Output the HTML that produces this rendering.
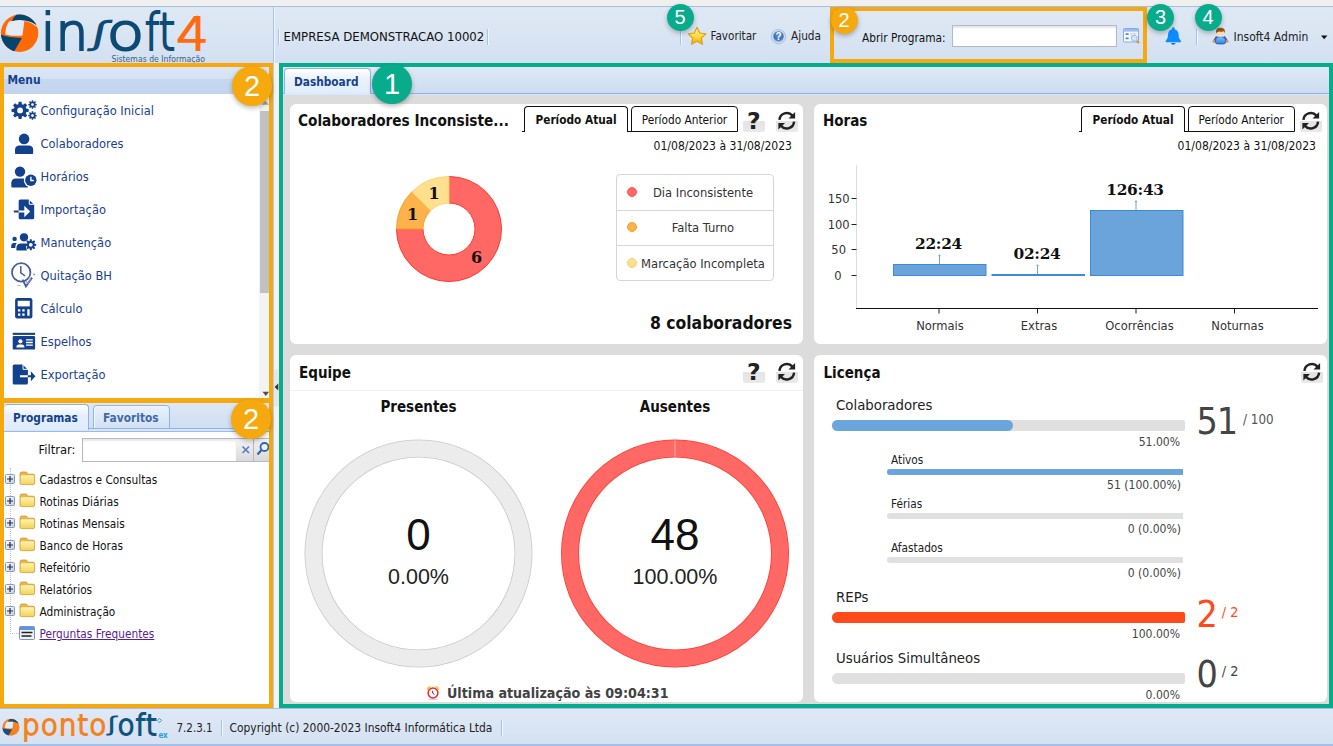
<!DOCTYPE html>
<html lang="pt-BR">
<head>
<meta charset="utf-8">
<title>Pontosoft - Dashboard</title>
<style>
*{box-sizing:border-box;margin:0;padding:0}
html,body{width:1333px;height:746px;overflow:hidden}
body{position:relative;background:#dce6f4;font-family:"DejaVu Sans Condensed","Liberation Sans",sans-serif;font-size:11.75px;color:#111}
.abs,.abs-c>*{position:absolute}
svg{position:absolute;overflow:visible}
.badge{position:absolute;border-radius:50%;color:#fff;text-align:center;font-family:"Liberation Sans",sans-serif;box-shadow:0 2px 5px rgba(0,0,0,.28);z-index:50}
.badge.o{background:#f6a90e}
.badge.tl{background:#08ab8b}
.big{width:40px;height:40px;line-height:41px;font-size:29px}
.sm{width:27px;height:27px;line-height:27px;font-size:20px}
.sep{position:absolute;width:2px;border-left:1px solid #a5c3ec;border-right:1px solid #f2f7fd;top:29px;height:16px}
.t{position:absolute;white-space:nowrap;line-height:1}
/* frames */
.frame{position:absolute;border-style:solid;z-index:40;pointer-events:none}
/* header */
#topstrip{left:0;top:0;width:1333px;height:6px;background:#f0f0f0}
#hdr{left:0;top:6px;width:1333px;height:57px;background:linear-gradient(#dfe9f4,#dae5f3 50%,#d2e0f1);border-top:1px solid #a3bfe8}
/* left */
#menuhd{left:4px;top:67px;width:265px;height:27px;background:linear-gradient(#dbe6f5 0,#d6e3f4 42%,#c6d8f0 46%,#c3d5ee 100%)}
#menu{left:4px;top:94px;width:265px;height:304px;background:#fff}
.mi{position:absolute;left:40.5px;font-size:12.75px;color:#1c3f8c;line-height:16px;white-space:nowrap}
.mic{position:absolute;left:0;top:0;fill:#14418b}
.tr{position:absolute;left:39.5px;font-size:11.75px;color:#111;white-space:nowrap;line-height:14px}

/* dashboard */
.card{position:absolute;background:#fff;border-radius:6px}
.ct{position:absolute;white-space:nowrap;line-height:1;font-family:"DejaVu Sans Condensed","DejaVu Sans","Liberation Sans",sans-serif;font-weight:bold;font-size:15px;color:#111;letter-spacing:0}
.ptab{position:absolute;top:106px;height:26px;border:1px solid #111;border-radius:4px 4px 0 0;background:#fff;font-size:11.75px;text-align:center;line-height:26px;color:#111;white-space:nowrap}
.ptab.on{border-bottom:none;font-weight:bold}
.ibtn{position:absolute;width:22px;height:21px;border-radius:2px;background:linear-gradient(#fff 0,#fff 45%,#e4e4e4 50%,#e9e9e9 100%)}
.q{position:absolute;font-weight:bold;font-size:23.5px;line-height:1;color:#222;font-family:"DejaVu Sans","Liberation Sans",sans-serif}
.dt{position:absolute;white-space:nowrap;line-height:1;font-size:12.05px;color:#111;text-align:right}
.lg{position:absolute;white-space:nowrap;line-height:1;font-size:12.85px;color:#333;text-align:center;left:633px;width:140px}
.sv{font-family:"DejaVu Serif","Liberation Serif",serif;font-weight:bold;font-size:15.4px;fill:#111;letter-spacing:-.3px}
.ax{font-family:"DejaVu Sans Condensed","Liberation Sans",sans-serif;font-size:12.8px;fill:#333}
.pl{position:absolute;white-space:nowrap;line-height:1;color:#222}
.ar{font-family:"Liberation Sans",sans-serif}
.pv{position:absolute;white-space:nowrap;line-height:1;color:#444;font-size:12.05px;text-align:right;width:120px}
.bar{position:absolute;background:#e0e0e0}
.bar i{position:absolute;left:0;top:0;height:100%;display:block}
</style>
</head>
<body>
<svg width="0" height="0"><defs><g id="rfi"><path d="M3.200 9.200A6.900 6.900 0 0 1 15.300 5.200" fill="none" stroke="#222" stroke-width="2.300"/><path d="M17.800 1.800V8h-6.200z" fill="#222"/><path d="M16.800 10.800A6.900 6.900 0 0 1 4.700 14.800" fill="none" stroke="#222" stroke-width="2.300"/><path d="M2.200 18.200V12h6.200z" fill="#222"/></g></defs></svg>
<div id="topstrip" class="abs"></div>
<div id="hdr" class="abs"></div>

<!-- ===== logo ===== -->
<svg style="left:0;top:13px" width="40" height="40" viewBox="0 0 40 40">
 <circle cx="19.6" cy="20.2" r="18.7" fill="#ff6a08"/>
 <path d="M5.3 21.4C5.4 16 6.6 12 9.2 8.3L12.1 7.9C16 6.7 21 6.6 24.4 7.7L22.5 22.4C16 23 10 22.7 5.3 21.4Z" fill="#e3ebf7"/>
 <path d="M24.2 7.3C29 8 33.5 9.8 37 13.2" fill="none" stroke="#e3ebf7" stroke-width="1.3"/>
 <path d="M12 8C13 5.2 14.6 3.2 16.6 1.8A18.7 18.7 0 0 1 36.6 12.4C31.5 8.3 21.5 5.6 12 8Z" fill="#05446e"/>
 <path d="M.95 21.6C6 23.8 13 24.6 21.9 25L14.3 38.2A18.7 18.7 0 0 1 .95 21.6Z" fill="#05446e"/>
</svg>
<div class="t" id="lg" style="left:41px;top:1.500px;font-family:'DejaVu Sans','Liberation Sans',sans-serif;font-weight:200;font-size:51px;line-height:62px;color:#0d4a75;-webkit-text-stroke:2.200px #0d4a75;letter-spacing:.5px">in<span id="esh" style="display:inline-block;transform:translateY(-6.500px) skewX(-12deg) scale(.9,.6);transform-origin:50% 48.600px;margin:0 1.500px 0 .5px;-webkit-text-stroke:3.200px #0d4a75">ʃ</span><span style="display:inline-block;transform:scaleX(1.200);margin:0 2.800px 0 2.200px">o</span><span style="display:inline-block;transform:scaleX(.82);margin:0 -1.800px">f</span><span style="display:inline-block;transform:scaleX(.82);margin:0 -1.600px 0 -2.400px">t</span><span style="display:inline-block;transform:scaleY(.88);transform-origin:50% 48.600px;color:#ff6a13;-webkit-text-stroke:2.200px #ff6a13">4</span></div>
<div class="t" style="left:111.500px;top:54.800px;font-size:8.600px;color:#3a6288">Sistemas de Informação</div>
<div class="abs" style="left:273px;top:7px;width:1px;height:56px;background:#a9c4ea"></div>
<div class="abs" style="left:274px;top:7px;width:1px;height:56px;background:#eef4fc"></div>

<!-- ===== header toolbar ===== -->
<div class="sep" style="left:278px"></div>
<div class="t" style="left:283.5px;top:30px;font-size:13.07px;color:#111">EMPRESA DEMONSTRACAO 10002</div>
<div class="sep" style="left:487px"></div>
<div class="sep" style="left:680px"></div>
<div class="t" style="left:710.5px;top:30.8px;font-size:11.6px;color:#222">Favoritar</div>
<div class="t" style="left:791px;top:30.8px;font-size:11.75px;color:#222">Ajuda</div>
<div class="t" style="left:862px;top:33px;font-size:11.78px;color:#111">Abrir Programa:</div>
<div class="abs" style="left:952px;top:25px;width:165px;height:22px;background:#fff;border:1px solid #b5b8c8;box-shadow:inset 0 2px 2px #e6e6e6"></div>
<div class="sep" style="left:1196px"></div>
<div class="t" style="left:1233.5px;top:30.8px;font-size:12px;color:#222">Insoft4 Admin</div>
<svg style="left:1321px;top:35px" width="7" height="5"><path d="M0 .5h6.4L3.2 4.2z" fill="#111"/></svg>

<!-- header icons -->
<svg width="0" height="0"><defs>
<linearGradient id="sg" x1="0" y1="0" x2="0" y2="1"><stop offset="0" stop-color="#fff3a0"/><stop offset=".55" stop-color="#ffd83a"/><stop offset="1" stop-color="#eda900"/></linearGradient>
<radialGradient id="hg" cx=".5" cy=".4" r=".6"><stop offset="0" stop-color="#5d8fcf"/><stop offset=".7" stop-color="#3f74b8"/><stop offset="1" stop-color="#9fc0e8"/></radialGradient>
<linearGradient id="ug" x1="0" y1="0" x2="0" y2="1"><stop offset="0" stop-color="#7cc4f8"/><stop offset="1" stop-color="#2f86e0"/></linearGradient>
</defs></svg>
<svg style="left:687px;top:26px" width="20" height="20" viewBox="0 0 20 20"><path d="M10 1.300l2.700 5.700 6.200.8-4.600 4.300 1.200 6.200L10 15.300l-5.500 3 1.200-6.200L1.100 7.800l6.200-.8z" fill="url(#sg)" stroke="#d8a31c" stroke-width="1.200" stroke-linejoin="round"/></svg>
<svg style="left:771px;top:28.500px" width="16" height="16" viewBox="0 0 16 16"><circle cx="7.500" cy="7.600" r="7.100" fill="#cfdff4" stroke="#9db9e2" stroke-width=".9"/><circle cx="7.500" cy="7.600" r="5.400" fill="url(#hg)"/><text x="7.500" y="11.300" text-anchor="middle" font-family="Liberation Sans,sans-serif" font-weight="bold" font-size="10" fill="#fff">?</text></svg>
<svg style="left:1123px;top:28px" width="18" height="17" viewBox="0 0 18 17"><rect x=".5" y=".5" width="15" height="13.500" rx=".8" fill="#f6f9fd" stroke="#8aa9dc"/><rect x="1" y="1" width="14" height="2.600" fill="#9dbaeb"/><path d="M2.600 6.200h3M2.600 10.400h3" stroke="#4f86e0" stroke-width="1.700"/><path d="M7 5.400h7M7 7h6" stroke="#ccd6e4" stroke-width="1"/><circle cx="11.300" cy="10.300" r="3" fill="#d4e6fa" stroke="#9ab5dd" stroke-width="1"/><path d="M13.700 12.800l2.300 2.400" stroke="#e08a3c" stroke-width="1.800"/></svg>
<svg style="left:1164px;top:26px" width="19" height="20" viewBox="0 0 19 20"><path d="M9.300 1.200q1.300 0 1.300 1.300v.7q4 1.200 4 5.800 0 3.800 1.800 5.300.6.500.6 1.100 0 .9-1.100.9H2.700q-1.100 0-1.100-.9 0-.6.600-1.100Q4 12.800 4 9q0-4.600 4-5.800v-.7q0-1.300 1.300-1.300z" fill="#0d8cff"/><path d="M7.100 17.100h4.400q0 1.700-2.200 1.700t-2.200-1.700z" fill="#0a6fe8"/></svg>
<svg style="left:1212px;top:27px" width="17" height="18" viewBox="0 0 17 18"><path d="M4.700 9.300L1.900 13.800M12.300 9.300L15.100 13.800" stroke="#2f55c4" stroke-width="1.500" fill="none"/><circle cx="2" cy="14.300" r="1.500" fill="#e8963c"/><circle cx="15" cy="14.300" r="1.500" fill="#e8963c"/><path d="M3.400 14.800Q3.200 9.600 8.500 9.600T13.600 14.800Q13.600 16.900 11.400 16.900H5.600Q3.400 16.900 3.400 14.800z" fill="url(#ug)" stroke="#2a4fc0" stroke-width=".9"/><circle cx="8.500" cy="5.600" r="4.300" fill="#f9dcb8"/><path d="M4 6.200Q3.400 .8 8.500 .8T13 6.200Q12.600 4.400 10.800 4.200 9.500 5.400 8 4.600 5.600 4.400 4 6.200z" fill="#9a5514"/></svg>

<!-- ===== left: menu ===== -->
<div id="menuhd" class="abs"></div>
<div class="t" style="left:7.5px;top:74.7px;font-size:11.84px;font-weight:bold;color:#15428b">Menu</div>
<div id="menu" class="abs"></div>
<div class="abs" style="left:258.500px;top:94px;width:10.500px;height:304px;background:#f3f3f3"></div>
<div class="abs" style="left:260px;top:111px;width:9px;height:182px;background:#c1c1c1"></div>
<svg style="left:261px;top:100px" width="8" height="6"><path d="M.5 4.800L4.300 .8L8 4.800z" fill="#a0a0a0"/></svg>
<svg style="left:262.200px;top:390.500px" width="8" height="6"><path d="M.5 .8h6.6L3.8 5z" fill="#505050"/></svg>
<div class="mi" style="top:103px">Configuração Inicial</div>
<div class="mi" style="top:136px">Colaboradores</div>
<div class="mi" style="top:169px">Horários</div>
<div class="mi" style="top:202px">Importação</div>
<div class="mi" style="top:235px">Manutenção</div>
<div class="mi" style="top:268px">Quitação BH</div>
<div class="mi" style="top:301px">Cálculo</div>
<div class="mi" style="top:334px">Espelhos</div>
<div class="mi" style="top:367px">Exportação</div>
<svg style="left:0;top:94px" width="60" height="304" viewBox="0 94 60 304" fill="#14418b">
<path fill-rule="evenodd" d="M26.23 108.57L28.68 108.97L28.68 111.83L26.23 112.23L25.73 113.44L27.18 115.46L25.16 117.48L23.14 116.03L21.93 116.53L21.53 118.98L18.67 118.98L18.27 116.53L17.06 116.03L15.04 117.48L13.02 115.46L14.47 113.44L13.97 112.23L11.52 111.83L11.52 108.97L13.97 108.57L14.47 107.36L13.02 105.34L15.04 103.32L17.06 104.77L18.27 104.27L18.67 101.82L21.53 101.82L21.93 104.27L23.14 104.77L25.16 103.32L27.18 105.34L25.73 107.36ZM23.00 110.40A2.9 2.9 0 1 0 17.20 110.40A2.9 2.9 0 1 0 23.00 110.40Z"/>
<path fill-rule="evenodd" d="M35.37 103.74L36.74 103.89L36.74 105.31L35.37 105.46L35.14 106.02L36.00 107.10L35.00 108.10L33.92 107.24L33.36 107.47L33.21 108.84L31.79 108.84L31.64 107.47L31.08 107.24L30.00 108.10L29.00 107.10L29.86 106.02L29.63 105.46L28.26 105.31L28.26 103.89L29.63 103.74L29.86 103.18L29.00 102.10L30.00 101.10L31.08 101.96L31.64 101.73L31.79 100.36L33.21 100.36L33.36 101.73L33.92 101.96L35.00 101.10L36.00 102.10L35.14 103.18ZM33.90 104.60A1.4 1.4 0 1 0 31.10 104.60A1.4 1.4 0 1 0 33.90 104.60Z"/>
<path fill-rule="evenodd" d="M35.37 114.74L36.74 114.89L36.74 116.31L35.37 116.46L35.14 117.02L36.00 118.10L35.00 119.10L33.92 118.24L33.36 118.47L33.21 119.84L31.79 119.84L31.64 118.47L31.08 118.24L30.00 119.10L29.00 118.10L29.86 117.02L29.63 116.46L28.26 116.31L28.26 114.89L29.63 114.74L29.86 114.18L29.00 113.10L30.00 112.10L31.08 112.96L31.64 112.73L31.79 111.36L33.21 111.36L33.36 112.73L33.92 112.96L35.00 112.10L36.00 113.10L35.14 114.18ZM33.90 115.60A1.4 1.4 0 1 0 31.10 115.60A1.4 1.4 0 1 0 33.90 115.60Z"/>
<circle cx="24.1" cy="138.9" r="5.3"/><path d="M15 153.200v-3.200q0-4.600 4.600-4.600h9q4.600 0 4.600 4.600v3.200q0 .8-.8.800H15.800q-.8 0-.8-.8z"/>
<circle cx="20" cy="171.600" r="5.200"/><path d="M11.300 186.600v-3.300q0-4.700 4.600-4.700h8.200q2 0 3 1.300l1 7.500H12.100q-.8 0-.8-.8z"/><circle cx="30.800" cy="180.300" r="6.900" fill="#fff"/><circle cx="30.800" cy="180.300" r="5.700"/><path d="M30.900 176.800v3.700h2.900" stroke="#fff" stroke-width="1.400" fill="none"/>
<path d="M18.700 200.900q0-1.500 1.500-1.500h8.600l5.400 5.400v13q0 1.500-1.500 1.500H20.200q-1.500 0-1.500-1.500z"/><path d="M29.300 199.400v4.900h4.900" fill="none" stroke="#fff" stroke-width="1"/><path d="M13.800 210.500h5v2h-5z"/><path d="M18.700 210.400h5.600v-4.600l5.900 5.700-5.900 5.700v-4.600h-5.600z" fill="#fff"/>
<circle cx="24" cy="237.300" r="4.100"/><path d="M16.400 250.600v-2.300q0-4.700 4.600-4.700h4.400q1.600 0 2.400.6l-2 2.800 1.200 3.600z"/><circle cx="14.600" cy="238.900" r="2.200"/><path d="M11.200 248v-1.800q0-3.200 3-3.200h2.600q-1.500 1.600-1.500 4.300v.7z"/><path fill-rule="evenodd" d="M34.54 243.68L36.23 243.90L36.23 245.70L34.54 245.92L34.23 246.65L35.27 248.00L34.00 249.27L32.65 248.23L31.92 248.54L31.70 250.23L29.90 250.23L29.68 248.54L28.95 248.23L27.60 249.27L26.33 248.00L27.37 246.65L27.06 245.92L25.37 245.70L25.37 243.90L27.06 243.68L27.37 242.95L26.33 241.60L27.60 240.33L28.95 241.37L29.68 241.06L29.90 239.37L31.70 239.37L31.92 241.06L32.65 241.37L34.00 240.33L35.27 241.60L34.23 242.95ZM32.70 244.80A1.9 1.9 0 1 0 28.90 244.80A1.9 1.9 0 1 0 32.70 244.80Z"/>
<g fill="none" stroke="#4a6098"><circle cx="21.200" cy="272.400" r="9.200" stroke-width="1.800"/><path d="M20.800 266v6.800l4.200 3" stroke-width="1.500"/><path d="M22.600 279.600l3.300 6.800 6.200-8.800" stroke-width="1.900"/><path d="M26 281l1.600 3 3.400-5" stroke-width="1" stroke="#8b9bc0"/><path d="M33 274.400h2.400M34.200 273.200v2.400" stroke-width=".8" stroke="#8b9bc0"/><path d="M17.500 285.500h3" stroke-width=".8" stroke="#8b9bc0"/></g>
<rect x="15.100" y="298" width="17.300" height="20.400" rx="2.200"/><rect x="17.700" y="300.800" width="12.100" height="5.600" fill="#fff"/><path d="M18 309.300h2.300v2.300H18zM22.300 309.300h2.300v2.300h-2.300zM18 313.400h2.300v2.300H18zM22.300 313.400h2.300v2.300h-2.300zM27.300 309.300h2.300v6.400h-2.300z" fill="#fff"/>
<rect x="12.700" y="332.800" width="22.400" height="2.100"/><rect x="12.700" y="336.100" width="22.400" height="13.500" rx="1.200"/><circle cx="20.400" cy="341.300" r="2.100" fill="#fff"/><path d="M16.400 347.500v-.6q0-2.500 2.500-2.500h3q2.500 0 2.500 2.500v.6z" fill="#fff"/><path d="M26 339.900h6.800M26 342.500h6.800M26 345.100h6.800" stroke="#fff" stroke-width="1.300"/>
<path d="M12.700 365.900q0-1.500 1.500-1.500h8.300l5.400 5.400v13.200q0 1.500-1.500 1.500H14.200q-1.500 0-1.500-1.500z"/><path d="M23 364.400v4.900h4.900" fill="none" stroke="#fff" stroke-width="1"/><path d="M20 375.200h7.900v2.100H20z" fill="#fff"/><path d="M27.900 375.200h3v-4l4.500 5-4.500 5v-3.900h-3z"/>
</svg>


<!-- ===== left: programas ===== -->
<div class="abs" style="left:4px;top:403px;width:265px;height:26px;background:linear-gradient(#dde8f6,#cfdef2)"></div>
<div class="abs" style="left:4px;top:428.300px;width:265px;height:4px;background:#d9e6f7;border-top:1px solid #8db2e3;border-bottom:1px solid #99bbe8"></div>
<div class="abs" style="left:4px;top:432px;width:265px;height:272px;background:#fff"></div>
<div class="abs" style="left:4px;top:404px;width:85px;height:25.500px;background:linear-gradient(#fff,#e6f0fc 40%,#deecfd);border:1px solid #8db2e3;border-bottom:none;border-radius:4px 4px 0 0;border-left:none"></div>
<div class="abs" style="left:92.5px;top:405px;width:77px;height:24px;border-bottom:none;background:linear-gradient(#e9f1fc,#d2e1f5);border:1px solid #8db2e3;border-radius:4px 4px 0 0;box-shadow:inset 1px 1px 0 #f4f8fd"></div>
<div class="t" style="left:13px;top:412.7px;font-size:11.8px;font-weight:bold;color:#15428b">Programas</div>
<div class="t" style="left:103px;top:412.7px;font-size:11.85px;font-weight:bold;color:#416aa3">Favoritos</div>
<div class="t" style="left:38.5px;top:443.6px;font-size:12.85px;color:#111">Filtrar:</div>
<div class="abs" style="left:82px;top:438px;width:155px;height:24px;background:#fff;border:1px solid #b5b8c8;box-shadow:inset 0 2px 2px #e8e8e8"></div>
<div class="abs" style="left:236px;top:438px;width:18px;height:24px;background:linear-gradient(#f4f4f4,#d9d9d9);border:1px solid #b5b8c8;border-left:none"></div>
<div class="abs" style="left:254px;top:438px;width:15px;height:24px;background:linear-gradient(#f4f4f4,#d9d9d9);border-top:1px solid #b5b8c8;border-bottom:1px solid #b5b8c8"></div>
<svg style="left:240.500px;top:445px" width="10" height="10"><path d="M1.500 1.500l6.500 6.500M8 1.500l-6.500 6.500" stroke="#4a7ec4" stroke-width="1.500" fill="none"/></svg>
<svg style="left:256px;top:441px" width="14" height="16"><circle cx="8.5" cy="6" r="4" fill="#eaf2fb" stroke="#2f65ad" stroke-width="1.8"/><path d="M5.5 9L1.5 13.5" stroke="#2f65ad" stroke-width="2.2"/></svg>
<div class="abs" style="left:10px;top:468px;width:0;height:166px;border-left:1px dotted #c4c4c4"></div>
<div class="abs" style="left:10px;top:633px;width:9px;height:0;border-top:1px dotted #c4c4c4"></div>
<svg width="0" height="0"><defs><linearGradient id="fg" x1="0" y1="0" x2="0" y2="1"><stop offset="0" stop-color="#fff3b0"/><stop offset="1" stop-color="#f4d35c"/></linearGradient><linearGradient id="pg" x1="0" y1="0" x2="1" y2="1"><stop offset="0" stop-color="#fff"/><stop offset="1" stop-color="#c3cde0"/></linearGradient></defs></svg>
<svg style="left:5px;top:474px" width="10" height="10"><rect x=".5" y=".5" width="9" height="9" rx="1" fill="url(#pg)" stroke="#8a9bb8"/><path d="M2 5h6M5 2v6" stroke="#1d2a4a" stroke-width="1.200"/></svg><svg style="left:19px;top:471px" width="17" height="15"><path d="M1 3.2Q1 1 3 1h3.6q1.4 0 1.9 1.4l.3.8H14q1.6 0 1.6 1.6V12q0 1.6-1.6 1.6H2.6Q1 13.600 1 12z" fill="#e8b84a" stroke="#c9962f" stroke-width=".8"/><rect x="1.6" y="4.200" width="13.600" height="9" rx="1.300" fill="url(#fg)"/></svg><div class="tr" style="top:473px">Cadastros e Consultas</div>
<svg style="left:5px;top:496px" width="10" height="10"><rect x=".5" y=".5" width="9" height="9" rx="1" fill="url(#pg)" stroke="#8a9bb8"/><path d="M2 5h6M5 2v6" stroke="#1d2a4a" stroke-width="1.200"/></svg><svg style="left:19px;top:493px" width="17" height="15"><path d="M1 3.2Q1 1 3 1h3.6q1.4 0 1.9 1.4l.3.8H14q1.6 0 1.6 1.6V12q0 1.6-1.6 1.6H2.6Q1 13.600 1 12z" fill="#e8b84a" stroke="#c9962f" stroke-width=".8"/><rect x="1.6" y="4.200" width="13.600" height="9" rx="1.300" fill="url(#fg)"/></svg><div class="tr" style="top:495px">Rotinas Diárias</div>
<svg style="left:5px;top:518px" width="10" height="10"><rect x=".5" y=".5" width="9" height="9" rx="1" fill="url(#pg)" stroke="#8a9bb8"/><path d="M2 5h6M5 2v6" stroke="#1d2a4a" stroke-width="1.200"/></svg><svg style="left:19px;top:515px" width="17" height="15"><path d="M1 3.2Q1 1 3 1h3.6q1.4 0 1.9 1.4l.3.8H14q1.6 0 1.6 1.6V12q0 1.6-1.6 1.6H2.6Q1 13.600 1 12z" fill="#e8b84a" stroke="#c9962f" stroke-width=".8"/><rect x="1.6" y="4.200" width="13.600" height="9" rx="1.300" fill="url(#fg)"/></svg><div class="tr" style="top:517px">Rotinas Mensais</div>
<svg style="left:5px;top:540px" width="10" height="10"><rect x=".5" y=".5" width="9" height="9" rx="1" fill="url(#pg)" stroke="#8a9bb8"/><path d="M2 5h6M5 2v6" stroke="#1d2a4a" stroke-width="1.200"/></svg><svg style="left:19px;top:537px" width="17" height="15"><path d="M1 3.2Q1 1 3 1h3.6q1.4 0 1.9 1.4l.3.8H14q1.6 0 1.6 1.6V12q0 1.6-1.6 1.6H2.6Q1 13.600 1 12z" fill="#e8b84a" stroke="#c9962f" stroke-width=".8"/><rect x="1.6" y="4.200" width="13.600" height="9" rx="1.300" fill="url(#fg)"/></svg><div class="tr" style="top:539px">Banco de Horas</div>
<svg style="left:5px;top:562px" width="10" height="10"><rect x=".5" y=".5" width="9" height="9" rx="1" fill="url(#pg)" stroke="#8a9bb8"/><path d="M2 5h6M5 2v6" stroke="#1d2a4a" stroke-width="1.200"/></svg><svg style="left:19px;top:559px" width="17" height="15"><path d="M1 3.2Q1 1 3 1h3.6q1.4 0 1.9 1.4l.3.8H14q1.6 0 1.6 1.6V12q0 1.6-1.6 1.6H2.6Q1 13.600 1 12z" fill="#e8b84a" stroke="#c9962f" stroke-width=".8"/><rect x="1.6" y="4.200" width="13.600" height="9" rx="1.300" fill="url(#fg)"/></svg><div class="tr" style="top:561px">Refeitório</div>
<svg style="left:5px;top:584px" width="10" height="10"><rect x=".5" y=".5" width="9" height="9" rx="1" fill="url(#pg)" stroke="#8a9bb8"/><path d="M2 5h6M5 2v6" stroke="#1d2a4a" stroke-width="1.200"/></svg><svg style="left:19px;top:581px" width="17" height="15"><path d="M1 3.2Q1 1 3 1h3.6q1.4 0 1.9 1.4l.3.8H14q1.6 0 1.6 1.6V12q0 1.6-1.6 1.6H2.6Q1 13.600 1 12z" fill="#e8b84a" stroke="#c9962f" stroke-width=".8"/><rect x="1.6" y="4.200" width="13.600" height="9" rx="1.300" fill="url(#fg)"/></svg><div class="tr" style="top:583px">Relatórios</div>
<svg style="left:5px;top:606px" width="10" height="10"><rect x=".5" y=".5" width="9" height="9" rx="1" fill="url(#pg)" stroke="#8a9bb8"/><path d="M2 5h6M5 2v6" stroke="#1d2a4a" stroke-width="1.200"/></svg><svg style="left:19px;top:603px" width="17" height="15"><path d="M1 3.2Q1 1 3 1h3.6q1.4 0 1.9 1.4l.3.8H14q1.6 0 1.6 1.6V12q0 1.6-1.6 1.6H2.6Q1 13.600 1 12z" fill="#e8b84a" stroke="#c9962f" stroke-width=".8"/><rect x="1.6" y="4.200" width="13.600" height="9" rx="1.300" fill="url(#fg)"/></svg><div class="tr" style="top:605px">Administração</div>
<svg style="left:19px;top:626px" width="16" height="14"><rect x=".5" y=".5" width="15" height="13" rx=".8" fill="#eef2f8" stroke="#7f93b6"/><rect x="1" y="1" width="14" height="3" fill="#5b95ea"/><path d="M2.500 6.500h5M6 6.500h7.500M2.500 10h3M4.500 10h8" stroke="#222" stroke-width="1.700"/></svg><div class="tr" style="top:627px;color:#5a1f96;text-decoration:underline">Perguntas Frequentes</div>


<!-- ===== main: tab strip ===== -->
<div class="abs" style="left:283px;top:67px;width:1046px;height:27px;background:linear-gradient(#dfe9f6,#cddcf0);border-bottom:1px solid #8db2e3"></div>
<div class="abs" style="left:283px;top:94px;width:1046px;height:1px;background:#dbe7f7"></div>
<div class="abs" style="left:283px;top:95px;width:1046px;height:609px;background:#dcdcdc"></div>
<div class="abs" style="left:283.500px;top:68px;width:87px;height:26px;background:linear-gradient(#fff,#ecf3fc 35%,#deecfd);border:1px solid #8db2e3;border-bottom:none;border-radius:4px 4px 0 0"></div>
<div class="t" style="left:294px;top:76.500px;font-size:11.75px;font-weight:bold;color:#15428b">Dashboard</div>

<!-- ===== card 1 ===== -->
<div class="card" style="left:290px;top:104px;width:513px;height:240px"></div>
<div class="ct" style="left:298px;top:114.200px;font-size:15.2px">Colaboradores Inconsiste...</div>
<div class="abs" style="left:522px;top:131px;width:3px;height:1px;background:#111"></div>
<div class="abs" style="left:627px;top:131px;width:5px;height:1px;background:#111"></div>
<div class="ptab on" style="left:524px;width:104px">Período Atual</div>
<div class="ptab" style="left:631px;width:107px">Período Anterior</div>
<div class="ibtn" style="left:743px;top:111px"></div>
<div class="q" style="left:747px;top:109.500px">?</div>
<div class="ibtn" style="left:776px;top:111px"></div>
<svg class="rf" style="left:776.2px;top:109.7px" width="21.500" height="21.500" viewBox="0 0 20 20"><use href="#rfi"/></svg>
<div class="dt" style="left:592px;width:200px;top:140.200px">01/08/2023 à 31/08/2023</div>
<svg style="left:388.800px;top:169.300px" width="120" height="120" viewBox="-60 -60 120 120">
 <path d="M0 -52.500A52.500 52.500 0 1 1 -52.500 0L-26 0A26 26 0 1 0 0 -26Z" fill="#ff6864" stroke="#ff3b30" stroke-width="1"/>
 <path d="M-52.500 0A52.500 52.500 0 0 1 -37.120 -37.120L-18.380 -18.380A26 26 0 0 0 -26 0Z" fill="#fdb24a" stroke="#f9a12c" stroke-width="1"/>
 <path d="M-37.120 -37.120A52.500 52.500 0 0 1 0 -52.500L0 -26A26 26 0 0 0 -18.380 -18.380Z" fill="#ffe08f" stroke="#fdd36f" stroke-width="1"/>
 <text class="sv" x="27.500" y="33.500" text-anchor="middle" style="font-size:16px">6</text>
 <text class="sv" x="-36.500" y="-9" text-anchor="middle" style="font-size:16px">1</text>
 <text class="sv" x="-15" y="-30.500" text-anchor="middle" style="font-size:16px">1</text>
</svg>
<div class="abs" style="left:616px;top:174px;width:158px;height:107px;border:1px solid #d6d6d6;border-radius:4px"></div>
<div class="abs" style="left:616px;top:210px;width:158px;height:1px;background:#d6d6d6"></div>
<div class="abs" style="left:616px;top:245px;width:158px;height:1px;background:#d6d6d6"></div>
<div class="abs" style="left:626.500px;top:187px;width:10px;height:10px;border-radius:50%;background:#ff6864;border:1px solid #f55"></div>
<div class="abs" style="left:626.500px;top:222px;width:10px;height:10px;border-radius:50%;background:#fdb24a;border:1px solid #f5a02c"></div>
<div class="abs" style="left:626.500px;top:257.500px;width:10px;height:10px;border-radius:50%;background:#ffe08f;border:1px solid #f3cf6f"></div>
<div class="lg" style="top:186.800px">Dia Inconsistente</div>
<div class="lg" style="top:221.800px">Falta Turno</div>
<div class="lg" style="top:257.600px">Marcação Incompleta</div>
<div class="ct" style="left:592px;width:200px;text-align:right;top:315.200px;font-size:17.4px;letter-spacing:0">8 colaboradores</div>

<!-- ===== card 2 ===== -->
<div class="card" style="left:814px;top:104px;width:513px;height:240px"></div>
<div class="ct" style="left:823px;top:114.200px">Horas</div>
<div class="abs" style="left:1079px;top:131px;width:3px;height:1px;background:#111"></div>
<div class="abs" style="left:1184px;top:131px;width:5px;height:1px;background:#111"></div>
<div class="ptab on" style="left:1081px;width:104px">Período Atual</div>
<div class="ptab" style="left:1187.500px;width:107.500px">Período Anterior</div>
<div class="ibtn" style="left:1300px;top:111px"></div>
<svg class="rf" style="left:1300.2px;top:109.7px" width="21.500" height="21.500" viewBox="0 0 20 20"><use href="#rfi"/></svg>
<div class="dt" style="left:1116px;width:200px;top:140.200px">01/08/2023 à 31/08/2023</div>
<svg style="left:814px;top:160px" width="513" height="184" viewBox="0 0 513 184">
 <path d="M42.500 5V149" stroke="#ddd" stroke-width="1" fill="none"/>
 <path d="M42 148.500H504" stroke="#111" stroke-width="1.200" fill="none"/>
 <path d="M37.500 38.500h5M37.500 64.500h5M37.500 89.500h5M37.500 115.500h5" stroke="#222" stroke-width="1" fill="none"/>
 <path d="M125 149v4.500M223.500 149v4.500M322 149v4.500M420.500 149v4.500" stroke="#222" stroke-width="1" fill="none"/>
 <text class="ax" x="24.700" y="43.3" text-anchor="middle">150</text>
 <text class="ax" x="24.700" y="69.3" text-anchor="middle">100</text>
 <text class="ax" x="24.700" y="94.3" text-anchor="middle">50</text>
 <text class="ax" x="24" y="120.300" text-anchor="middle">0</text>
 <rect x="79.500" y="104.500" width="92.500" height="11" fill="#6ba4db" stroke="#3d8ad8" stroke-width="1"/>
 <rect x="178" y="114.500" width="92.500" height="1" fill="#6ba4db" stroke="#3d8ad8" stroke-width="1"/>
 <rect x="276.500" y="50.500" width="92.500" height="65" fill="#6ba4db" stroke="#3d8ad8" stroke-width="1"/>
 <path d="M125.500 104V96M223.500 114V106M322 50V42" stroke="#6ba4db" stroke-width="1" fill="none"/>
 <circle cx="125.500" cy="95.500" r="1" fill="#6ba4db"/><circle cx="223.500" cy="105.500" r="1" fill="#6ba4db"/><circle cx="322" cy="41.500" r="1" fill="#6ba4db"/>
 <text class="sv" x="124.500" y="89" text-anchor="middle">22:24</text>
 <text class="sv" x="223" y="99" text-anchor="middle">02:24</text>
 <text class="sv" x="321" y="35" text-anchor="middle">126:43</text>
 <text class="ax" x="126" y="170" text-anchor="middle">Normais</text>
 <text class="ax" x="225" y="170" text-anchor="middle">Extras</text>
 <text class="ax" x="325.500" y="170" text-anchor="middle">Ocorrências</text>
 <text class="ax" x="423.500" y="170" text-anchor="middle">Noturnas</text>
</svg>

<!-- ===== card 3 ===== -->
<div class="card" style="left:290px;top:355px;width:513px;height:347px;border-radius:6px"></div>
<div class="abs" style="left:290px;top:390px;width:513px;height:1px;background:#eef3fa"></div>
<div class="ct" style="left:299px;top:366px">Equipe</div>
<div class="ibtn" style="left:743px;top:362px"></div>
<div class="q" style="left:747px;top:361px">?</div>
<div class="ibtn" style="left:776px;top:362px"></div>
<svg class="rf" style="left:776.2px;top:360.7px" width="21.500" height="21.500" viewBox="0 0 20 20"><use href="#rfi"/></svg>
<div class="ct" style="left:318.500px;width:200px;text-align:center;top:399.500px">Presentes</div>
<div class="ct" style="left:575px;width:200px;text-align:center;top:399.500px">Ausentes</div>
<svg style="left:300px;top:435px" width="500" height="240" viewBox="300 435 500 240">
 <circle cx="418.500" cy="553.500" r="105" fill="none" stroke="#c9c9c9" stroke-width="18"/>
 <circle cx="418.500" cy="553.500" r="105" fill="none" stroke="#ececec" stroke-width="16.400"/>
 <circle cx="675" cy="553.500" r="105" fill="none" stroke="#ff3b30" stroke-width="18"/>
 <circle cx="675" cy="553.500" r="105" fill="none" stroke="#ff6864" stroke-width="16.400"/>
 <path d="M675 440.500v16" stroke="#ffb0ac" stroke-width="1"/>
</svg>
<div class="pl ar" style="left:318.500px;width:200px;text-align:center;top:513.300px;font-size:44px;color:#111">0</div>
<div class="pl ar" style="left:318.500px;width:200px;text-align:center;top:566.500px;font-size:21.500px;color:#222">0.00%</div>
<div class="pl ar" style="left:575px;width:200px;text-align:center;top:513.300px;font-size:44px;color:#111">48</div>
<div class="pl ar" style="left:575px;width:200px;text-align:center;top:566.500px;font-size:21.500px;color:#222">100.00%</div>
<svg style="left:426px;top:685px" width="14" height="16" viewBox="0 0 14 16"><path d="M1.200 4.200Q1.400 1.400 4.600 1.600L1.800 4.800zM12.800 4.200Q12.600 1.400 9.400 1.600L12.200 4.800z" fill="#fcc21b" stroke="#fcc21b" stroke-width=".8" stroke-linejoin="round"/><path d="M2.500 14.300h9" stroke="#cfd3d6" stroke-width="1.300"/><circle cx="7" cy="8" r="4.900" fill="#fff" stroke="#f5222d" stroke-width="1.500"/><path d="M6.700 5.800v2.400l1.700 1.300" stroke="#333" stroke-width="1" fill="none"/></svg>
<div class="ct" style="left:447px;top:686px;color:#424242;font-size:14.15px;letter-spacing:0">Última atualização às 09:04:31</div>

<!-- ===== card 4 ===== -->
<div class="card" style="left:814px;top:355px;width:513px;height:347px"></div>
<div class="ct" style="left:823.500px;top:366px">Licença</div>
<div class="ibtn" style="left:1301px;top:362px"></div>
<svg class="rf" style="left:1301.2px;top:360.7px" width="21.500" height="21.500" viewBox="0 0 20 20"><use href="#rfi"/></svg>

<div class="pl" style="left:836px;top:397.700px;font-size:14.8px">Colaboradores</div>
<div class="bar" style="left:832px;top:420.100px;width:353px;height:10.800px;border-radius:5.500px 2px 2px 5.500px"><i style="width:181px;background:#6aa5db;border-radius:5.500px"></i></div>
<div class="pv" style="left:1060px;top:436.200px">51.00%</div>
<div class="pl" style="left:1196.500px;top:403.300px;font-size:37.300px;letter-spacing:-1.2px;color:#444">51</div>
<div class="pl" style="left:1243px;top:413px;font-size:13.3px;color:#555">/ 100</div>

<div class="pl" style="left:891px;top:455.000px;font-size:11.75px">Ativos</div>
<div class="bar" style="left:887px;top:469.200px;width:296px;height:6px;border-radius:3px 0 0 3px"><i style="width:296px;background:#6aa5db;border-radius:3px 0 0 3px"></i></div>
<div class="pv" style="left:1061px;top:479px">51 (100.00%)</div>
<div class="pl" style="left:891px;top:499.000px;font-size:11.75px">Férias</div>
<div class="bar" style="left:887px;top:513.200px;width:296px;height:6px;border-radius:3px 0 0 3px"></div>
<div class="pv" style="left:1061px;top:523px">0 (0.00%)</div>
<div class="pl" style="left:891px;top:543.000px;font-size:11.75px">Afastados</div>
<div class="bar" style="left:887px;top:557.200px;width:296px;height:6px;border-radius:3px 0 0 3px"></div>
<div class="pv" style="left:1061px;top:567px">0 (0.00%)</div>

<div class="pl" style="left:836px;top:589.500px;font-size:14.8px">REPs</div>
<div class="bar" style="left:832px;top:612.100px;width:353px;height:10.800px;border-radius:5.500px 2px 2px 5.500px"><i style="width:353px;background:#ff4a1c;border-radius:5.500px 2px 2px 5.500px"></i></div>
<div class="pv" style="left:1060px;top:628px">100.00%</div>
<div class="pl" style="left:1196.500px;top:596.200px;font-size:37.300px;color:#ff4a1c">2</div>
<div class="pl" style="left:1221.800px;top:604.700px;font-size:14.3px;color:#ff4a1c">/ 2</div>

<div class="pl" style="left:836px;top:650.500px;font-size:14.8px">Usuários Simultâneos</div>
<div class="bar" style="left:832px;top:673.100px;width:353px;height:10.800px;border-radius:5.500px 2px 2px 5.500px"></div>
<div class="pv" style="left:1060px;top:689px">0.00%</div>
<div class="pl" style="left:1196.500px;top:656px;font-size:37.300px;color:#444">0</div>
<div class="pl" style="left:1221.800px;top:664.300px;font-size:14.3px;color:#444">/ 2</div>


<!-- ===== splitter ===== -->
<div class="abs" style="left:273px;top:63px;width:6px;height:645px;background:#f3f3f3;border-left:1px solid #b5cdf0"></div>
<div class="abs" style="left:274px;top:369px;width:5px;height:38px;background:#e6e6e6;border-radius:3px"></div>
<svg style="left:274px;top:383px" width="5" height="8"><path d="M4.300 .5v7L.6 4z" fill="#333"/></svg>

<!-- ===== highlight frames ===== -->
<div class="frame" style="left:0;top:63px;width:273px;height:340px;border-width:4px 4px 5px 4px;border-color:#f6a90e"></div>
<div class="frame" style="left:0;top:398px;width:273px;height:310px;border-width:5px 4px 4px 4px;border-color:#f6a90e"></div>
<div class="frame" style="left:830px;top:7px;width:317px;height:56px;border-width:4px;border-color:#f6a90e"></div>
<div class="frame" style="left:279px;top:63px;width:1054px;height:645px;border-width:4px;border-color:#06ad8c"></div>

<!-- ===== numbered badges ===== -->
<div class="badge o big" style="left:232px;top:66px">2</div>
<div class="badge o big" style="left:231px;top:399px">2</div>
<div class="badge tl big" style="left:372px;top:64px">1</div>
<div class="badge tl sm" style="left:666.5px;top:3.5px">5</div>
<div class="badge o sm" style="left:830.500px;top:7.3px">2</div>
<div class="badge tl sm" style="left:1147px;top:3.5px">3</div>
<div class="badge tl sm" style="left:1194.500px;top:3.5px">4</div>

<!-- ===== footer ===== -->
<div class="abs" style="left:0;top:708px;width:1333px;height:38px;background:linear-gradient(#dfe8f6,#d5e2f2);border-top:1px solid #a3bfe8;border-bottom:2px solid #a3c0ea"></div>
<div class="t" style="left:176.500px;top:722.600px;font-size:11.5px;color:#222">7.2.3.1</div>
<div class="sep" style="left:221px;top:720px"></div>
<div class="t" style="left:229.500px;top:722.600px;font-size:11.9px;color:#222">Copyright (c) 2000-2023 Insoft4 Informática Ltda</div>
<div class="sep" style="left:501px;top:720px"></div>
<svg style="left:2px;top:718px" width="19" height="19" viewBox="0 0 19 19"><circle cx="8.900" cy="9.300" r="8.500" fill="#f58220"/><path d="M2.800 9.700C2.900 7.400 3.500 5.600 4.600 4L6 3.800C8 3.300 10 3.300 11.400 3.800L10.500 10.300C7.500 10.500 5 10.300 2.800 9.700Z" fill="#e3ebf7"/><path d="M5.800 3.800C6.300 2.500 7 1.600 8 1A8.500 8.500 0 0 1 16.700 5.800C14.500 4 10 2.800 5.800 3.800Z" fill="#1c4f7c"/><path d="M.45 10C3 11 6 11.300 10.100 11.500L6.600 17.500A8.500 8.500 0 0 1 .45 10Z" fill="#1c4f7c"/></svg>
<div class="t" id="fl" style="left:22px;top:702.400px;font-family:'DejaVu Sans','Liberation Sans',sans-serif;font-weight:200;font-size:28px;line-height:48px;color:#f58220;-webkit-text-stroke:1.800px #f58220;letter-spacing:.9px">ponto<span style="color:#0d5480;-webkit-text-stroke:1.800px #0d5480"><span style="display:inline-block;transform:translateY(-4px) scaleY(.68);transform-origin:50% 33.700px">ʃ</span>oft</span></div>
<div class="t" style="left:158.500px;top:732px;font-size:8px;font-weight:bold;color:#2a9fd6;letter-spacing:-.3px">ex</div>
<svg style="left:157px;top:718px" width="5" height="5"><path d="M2.500 .4L4.600 2.500 2.500 4.600.4 2.500z" fill="none" stroke="#2a7fb6" stroke-width=".8"/></svg>


</body>
</html>
